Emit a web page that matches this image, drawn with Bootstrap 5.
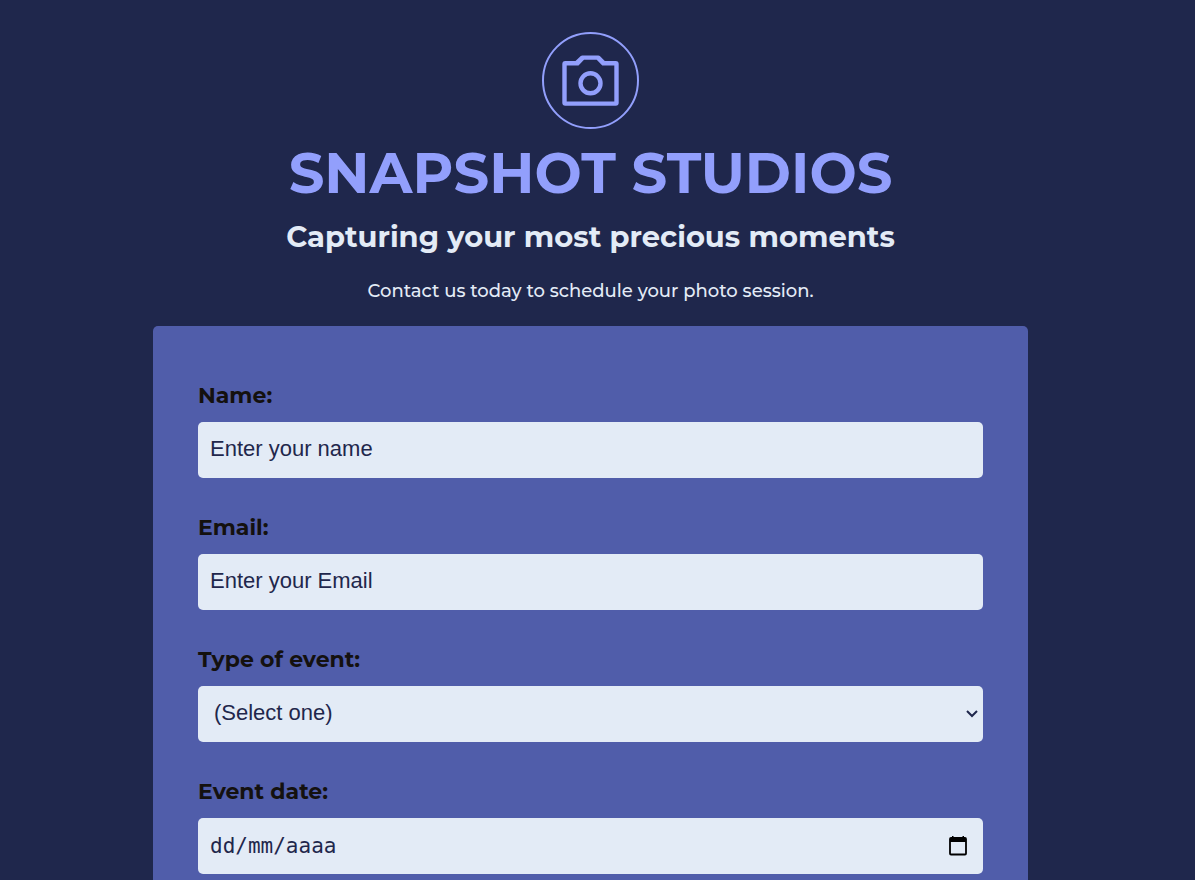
<!DOCTYPE html>
<html lang="en">
<head>
<meta charset="utf-8">
<meta name="viewport" content="width=device-width, initial-scale=1">
<title>Snapshot Studios</title>
<link href="https://cdn.jsdelivr.net/npm/bootstrap@5.3.0/dist/css/bootstrap.min.css" rel="stylesheet">
<style>
  body {
    background: #1f274c;
    color: #e3ebf6;
    font-family: Montserrat, Inter, sans-serif;
    padding-right: 14px;
  }
  .logo-ring {
    width: 97px;
    height: 97px;
    border: 2px solid #929ffc;
    color: #929ffc;
  }
  .brand-title {
    color: #929ffc;
    font-size: 56px;
    line-height: 56px;
    font-weight: 700;
  }
  .brand-tagline {
    font-size: 29px;
    line-height: 40px;
    font-weight: 700;
  }
  .brand-note {
    font-size: 18px;
    line-height: 21px;
    font-weight: 500;
  }
  .booking-form {
    max-width: 875px;
    padding: 52px 45px 45px;
    gap: 32px;
    background: #505daa;
    border-radius: 5px;
  }
  .booking-form .form-label {
    color: #14110f;
    font-size: 22px;
    line-height: 36px;
    font-weight: 700;
    margin-bottom: 8px;
  }
  .field-box,
  .field-box:focus {
    height: 56px;
    padding: 8px 12px 10px;
    border: 0;
    border-radius: 5px;
    background-color: #e3ebf6;
    color: #1f274c;
    font-family: "Liberation Sans", sans-serif;
    font-size: 22px;
    line-height: 36px;
  }
  .field-box::placeholder { color: #1f274c; opacity: 1; }
  .form-select.field-box {
    padding-left: 16px;
    background-image: url("data:image/svg+xml,%3Csvg xmlns='http://www.w3.org/2000/svg' viewBox='0 0 12 8'%3E%3Cpath d='M1 1l5 5 5-5' fill='none' stroke='%231f274c' stroke-width='2'/%3E%3C/svg%3E");
    background-position: right 5px center;
    background-size: 12px 8px;
  }
  .date-box, .date-box:focus {
    padding: 10px 60px 10px 12px;
    font-family: Consolas, "DejaVu Sans Mono", monospace;
    font-size: 21px;
  }
  .date-picker-btn { color: #000; line-height: 0; }
</style>
</head>
<body>
<header class="d-flex flex-column align-items-center text-center pt-4 mt-2">
  <div class="logo-ring rounded-circle d-flex align-items-center justify-content-center">
    <svg width="58" height="52" viewBox="0 0 58 52" fill="none" stroke="currentColor" stroke-width="4.4" stroke-linejoin="round" aria-hidden="true">
      <rect x="0.300" y="6" width="56.400" height="44.800" rx="3" fill="currentColor" stroke="none"/>
      <path d="M14.500 8.200L20.300 2.600H36.300L42 8.200" fill="currentColor"/>
      <path d="M4.700 10.400H16.500L22 4.800H34.700L40.300 10.400H52.300V46.400H4.700Z" fill="#1f274c" stroke="none"/>
      <circle cx="28.500" cy="28.300" r="10"/>
    </svg>
  </div>
  <h1 class="brand-title text-uppercase my-3">Snapshot Studios</h1>
  <h2 class="brand-tagline mb-4">Capturing your most precious moments</h2>
  <p class="brand-note mb-4">Contact us today to schedule your photo session.</p>
</header>
<main class="d-flex justify-content-center">
  <form class="booking-form w-100 d-flex flex-column">
    <div>
      <label class="form-label d-block" for="name">Name:</label>
      <input class="form-control field-box" id="name" type="text" placeholder="Enter your name">
    </div>
    <div>
      <label class="form-label d-block" for="email">Email:</label>
      <input class="form-control field-box" id="email" type="email" placeholder="Enter your Email">
    </div>
    <div>
      <label class="form-label d-block" for="event-type">Type of event:</label>
      <select class="form-select field-box" id="event-type">
        <option>(Select one)</option>
      </select>
    </div>
    <div>
      <label class="form-label d-block" for="event-date">Event date:</label>
      <div class="position-relative">
        <input class="form-control field-box date-box" id="event-date" type="text" placeholder="dd/mm/aaaa">
        <button class="date-picker-btn btn border-0 position-absolute top-50 end-0 translate-middle-y" type="button" aria-label="Open calendar">
          <svg width="26" height="20" viewBox="0 0 26 20" aria-hidden="true">
            <rect x="5" y="2" width="16" height="16.500" rx="1" fill="none" stroke="currentColor" stroke-width="1.800"/>
            <path d="M5 2H21V6H5ZM7 0H8.500V3H7ZM17.500 0H19V3H17.500Z" fill="currentColor"/>
          </svg>
        </button>
      </div>
    </div>
  </form>
</main>
<script src="https://cdn.jsdelivr.net/npm/bootstrap@5.3.0/dist/js/bootstrap.bundle.min.js"></script>
</body>
</html>
